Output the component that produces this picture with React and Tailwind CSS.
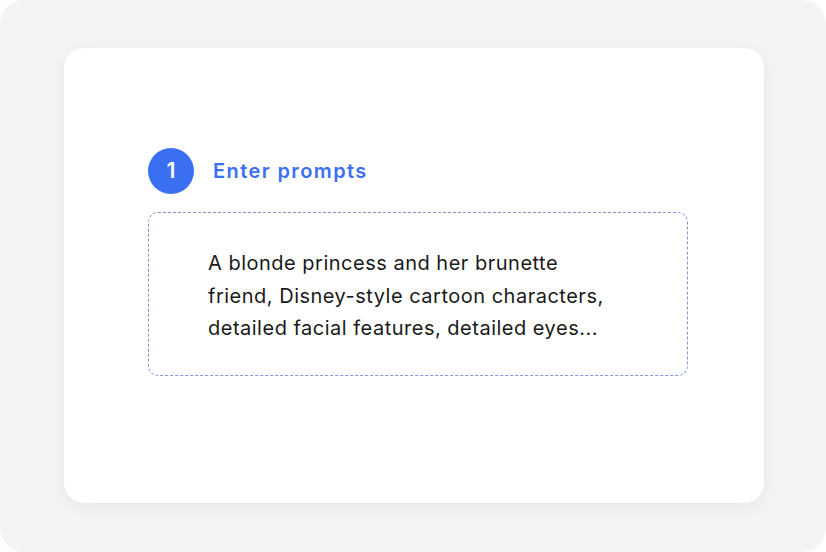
export default function App() {
  return (
    <div className="w-[826px] h-[552px] bg-white" style={{ fontFamily: "Inter, 'Noto Sans', sans-serif" }}>
      <div className="w-full h-full rounded-[24px] bg-[#f4f4f4] pt-[48px] pl-[64px]">
        <div className="w-[700px] h-[455px] bg-white rounded-[20px] shadow-[0_4px_16px_rgba(0,0,0,0.06)] pt-[100px] pl-[84px]">
          <div className="flex items-center gap-[19px]">
            <div className="w-[46px] h-[46px] rounded-full bg-[#3a6ff2] flex items-center justify-center text-white text-[21px] font-semibold">1</div>
            <div className="text-[#3a6ff2] text-[20px] font-semibold tracking-[1.4px]">Enter prompts</div>
          </div>
          <div className="mt-[18px] w-[540px] h-[164px] rounded-[10px] border border-dashed border-[#7f95d6] pt-[34px] pl-[59px]">
            <p className="text-[#1a1a1a] text-[20px] leading-[32.5px] tracking-[0.5px] whitespace-nowrap">
              A blonde princess and her brunette<br />
              friend, Disney-style cartoon characters,<br />
              detailed facial features, detailed eyes...
            </p>
          </div>
        </div>
      </div>
    </div>
  );
}
